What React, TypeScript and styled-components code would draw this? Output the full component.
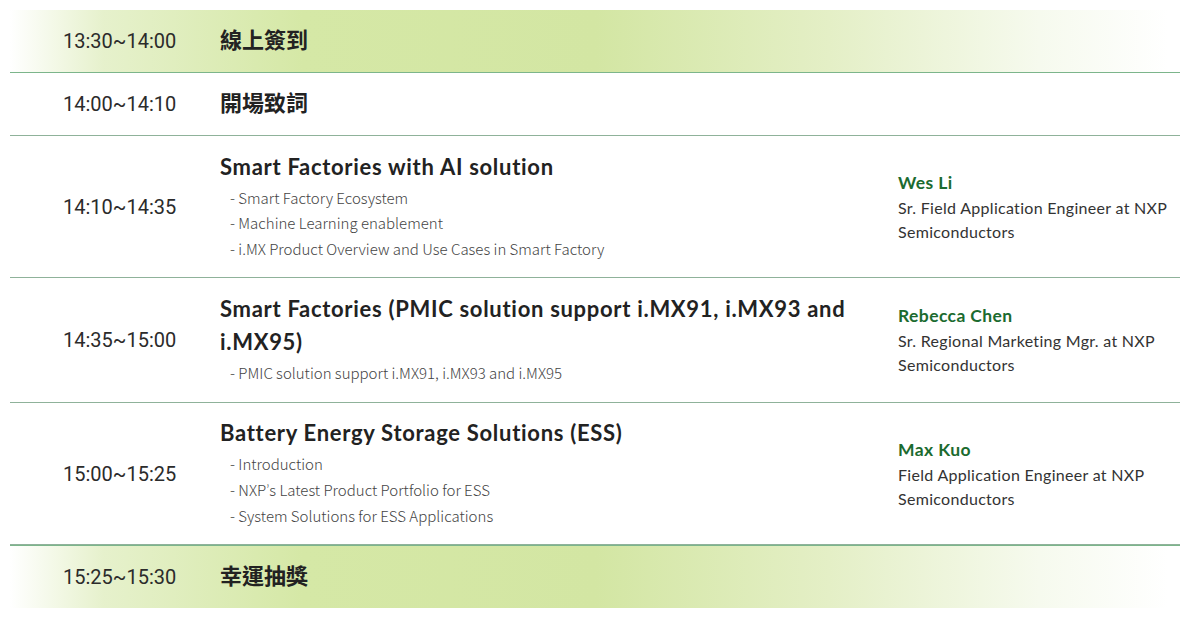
import React from "react";
import styled, { createGlobalStyle } from "styled-components";

const Global = createGlobalStyle`
  html, body { margin: 0; padding: 0; background: #fff; }
  body { font-family: "Lato", "Noto Sans CJK TC", sans-serif; color: #333; }
`;

const Wrap = styled.div`
  padding: 10px 6px 0 10px;
  width: 1170px;
`;

const Row = styled.div<{ $hl?: boolean; $h: number; $last?: boolean }>`
  display: grid;
  grid-template-columns: 210px 678px 1fr;
  align-items: center;
  height: ${(p) => p.$h}px;
  box-sizing: border-box;
  border-bottom: ${(p) => (p.$last ? "none" : `1px solid ${p.$hl ? "#7cb58b" : "#8fb29a"}`)};
  border-top: ${(p) => (p.$last ? "1px solid #7cb58b" : "none")};
  background: ${(p) =>
    p.$hl
      ? "linear-gradient(90deg, #ffffff 0%, #e6f1cc 8%, #d5e8a6 25%, #d3e6a3 50%, #e4efc6 70%, #f6faee 88%, #ffffff 99%, #ffffff 100%)"
      : "transparent"};
`;

const Time = styled.div`
  padding-left: 53px;
  font-family: "Roboto", "Liberation Sans", sans-serif;
  font-size: 20px;
  color: #2b2b2b;
`;

const Main = styled.div`
  display: flex;
  flex-direction: column;
  padding-right: 20px;
`;

const Title = styled.div<{ $cjk?: boolean }>`
  font-family: ${(p) => (p.$cjk ? `"Noto Sans CJK TC", sans-serif` : `"Lato", "Noto Sans CJK TC", sans-serif`)};
  font-weight: 700;
  font-size: 22px;
  letter-spacing: ${(p) => (p.$cjk ? "0" : "0.7px")};
  line-height: 33px;
  margin: ${(p) => (p.$cjk ? "-5px 0 0" : "-2px 0 2px")};
  color: #222;
`;

const Bullets = styled.ul`
  list-style: none;
  margin: 0;
  padding: 0 0 0 10px;
`;

const Bullet = styled.li`
  font-family: "Noto Sans CJK TC", sans-serif;
  font-weight: 300;
  font-size: 15px;
  line-height: 25.5px;
  color: #444;
`;

const Apos = styled.span`
  font-family: "Lato", sans-serif;
`;

const Speaker = styled.div`
  display: flex;
  flex-direction: column;
`;

const Name = styled.div`
  font-family: "Lato", sans-serif;
  font-weight: 700;
  font-size: 17.5px;
  letter-spacing: 0.4px;
  line-height: 26px;
  color: #1b6b2f;
`;

const Role = styled.div`
  font-family: "Lato", sans-serif;
  font-size: 16px;
  letter-spacing: 0.3px;
  line-height: 24px;
  color: #333;
`;

type Item = {
  time: string;
  title: string;
  cjk?: boolean;
  hl?: boolean;
  h: number;
  bullets?: React.ReactNode[];
  name?: string;
  role?: string[];
  last?: boolean;
};

const items: Item[] = [
  { time: "13:30~14:00", title: "線上簽到", cjk: true, hl: true, h: 63 },
  { time: "14:00~14:10", title: "開場致詞", cjk: true, h: 63 },
  {
    time: "14:10~14:35",
    title: "Smart Factories with AI solution",
    h: 142,
    bullets: [
      "Smart Factory Ecosystem",
      "Machine Learning enablement",
      "i.MX Product Overview and Use Cases in Smart Factory",
    ],
    name: "Wes Li",
    role: ["Sr. Field Application Engineer at NXP", "Semiconductors"],
  },
  {
    time: "14:35~15:00",
    title: "Smart Factories (PMIC solution support i.MX91, i.MX93 and i.MX95)",
    h: 125,
    bullets: ["PMIC solution support i.MX91, i.MX93 and i.MX95"],
    name: "Rebecca Chen",
    role: ["Sr. Regional Marketing Mgr. at NXP", "Semiconductors"],
  },
  {
    time: "15:00~15:25",
    title: "Battery Energy Storage Solutions (ESS)",
    h: 142,
    bullets: [
      "Introduction",
      <>
        NXP<Apos>’</Apos>s Latest Product Portfolio for ESS
      </>,
      "System Solutions for ESS Applications",
    ],
    name: "Max Kuo",
    role: ["Field Application Engineer at NXP", "Semiconductors"],
  },
  { time: "15:25~15:30", title: "幸運抽獎", cjk: true, hl: true, h: 63, last: true },
];

export default function App() {
  return (
    <Wrap>
      <Global />
      {items.map((it) => (
        <Row key={it.time} $hl={it.hl} $h={it.h} $last={it.last}>
          <Time>{it.time}</Time>
          <Main>
            <Title $cjk={it.cjk}>{it.title}</Title>
            {it.bullets && (
              <Bullets>
                {it.bullets.map((b, i) => (
                  <Bullet key={i}>- {b}</Bullet>
                ))}
              </Bullets>
            )}
          </Main>
          <Speaker>
            {it.name && <Name>{it.name}</Name>}
            {it.role && it.role.map((r) => <Role key={r}>{r}</Role>)}
          </Speaker>
        </Row>
      ))}
    </Wrap>
  );
}
